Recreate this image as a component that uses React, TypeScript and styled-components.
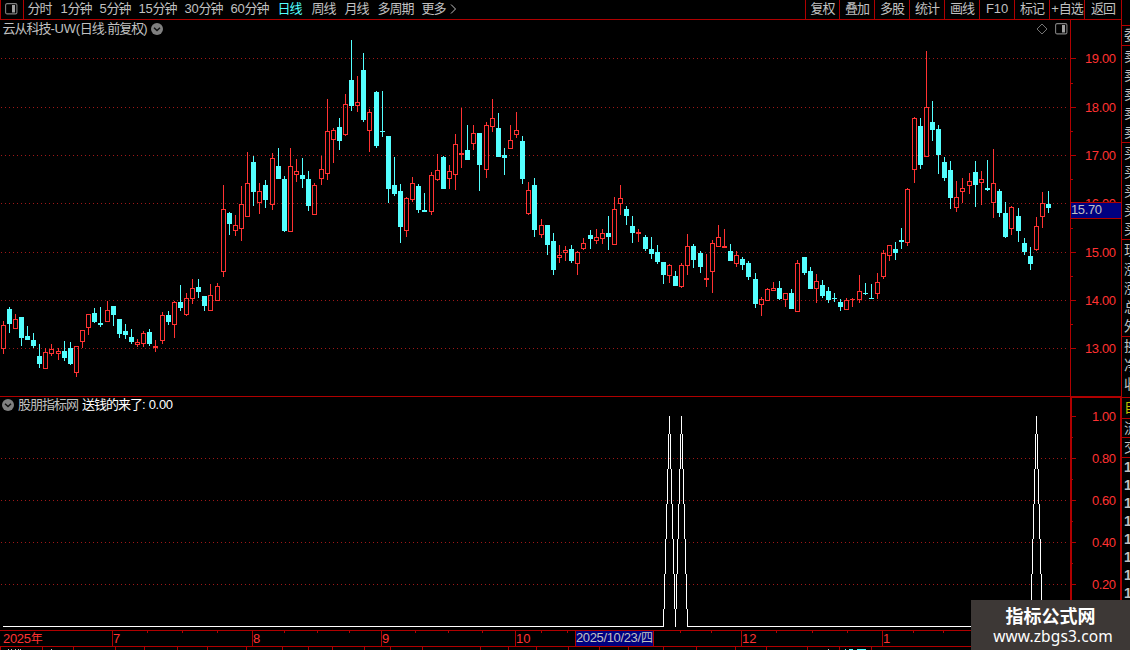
import React from "react";
import styled, { createGlobalStyle } from "styled-components";

const LINE = "#b00000";
const RED = "#ff3232";
const CYAN = "#54ffff";
const SILVER = "#c0c0c0";
const FONT = `"Liberation Sans", "Noto Sans CJK SC", sans-serif`;

const Global = createGlobalStyle`
  * { box-sizing: border-box; }
  html, body { margin: 0; padding: 0; background: #000; overflow: hidden; }
`;

const Screen = styled.div`
  position: relative;
  display: flex;
  width: 1130px;
  height: 650px;
  overflow: hidden;
  background: #000;
  color: ${SILVER};
  font-family: ${FONT};
  font-size: 13px;
`;

const Main = styled.main`
  display: flex;
  flex-direction: column;
  width: 1121px;
  flex: none;
`;

const Toolbar = styled.nav`
  display: flex;
  justify-content: space-between;
  height: 20px;
  border-bottom: 1px solid ${LINE};
`;

const ToolGroup = styled.div`
  display: flex;
`;

const PaneToggle = styled.div`
  display: flex;
  align-items: center;
  width: 24px;
  height: 19px;
  padding: 0 0 1px 4px;
  border: solid ${LINE};
  border-width: 0 1px;
`;

const Period = styled.div<{ $w: number; $active?: boolean }>`
  width: ${(p) => p.$w}px;
  padding-left: 3.5px;
  line-height: 18px;
  white-space: nowrap;
  color: ${(p) => (p.$active ? CYAN : SILVER)};
`;

const Command = styled.div<{ $w: number }>`
  display: flex;
  justify-content: center;
  width: ${(p) => p.$w}px;
  border-left: 1px solid ${LINE};
  line-height: 18px;
  white-space: nowrap;
`;

const Han = styled.span`
  letter-spacing: -1px;
`;

const Latin = styled.span<{ $track?: number }>`
  letter-spacing: ${(p) => p.$track ?? -0.3}px;
`;

const Panel = styled.section<{ $h: number }>`
  position: relative;
  height: ${(p) => p.$h}px;
`;

const PanelTitle = styled.div<{ $top: number; $left: number }>`
  position: absolute;
  top: ${(p) => p.$top}px;
  left: ${(p) => p.$left}px;
  display: flex;
  align-items: center;
  gap: 4px;
  height: 18px;
  line-height: 18px;
  white-space: pre;
`;

const Reading = styled.span`
  color: #fff;
`;

const PanelTools = styled.div`
  position: absolute;
  top: 3px;
  right: 53px;
  display: flex;
  align-items: center;
  gap: 7px;
`;

const Canvas = styled.svg`
  display: block;
  font-family: ${FONT};
`;

const Side = styled.aside`
  width: 9px;
  height: 650px;
  flex: none;
  overflow: hidden;
  border-left: 1px solid ${LINE};
`;

const SideBlock = styled.div<{ $h: number; $pad?: number }>`
  height: ${(p) => p.$h}px;
  padding-top: ${(p) => p.$pad ?? 0}px;
  border-bottom: 1px solid ${LINE};
  overflow: hidden;
`;

const SideRow = styled.div<{ $h?: number; $color?: string; $bold?: boolean }>`
  height: ${(p) => p.$h ?? 19}px;
  line-height: ${(p) => p.$h ?? 19}px;
  width: 24px;
  padding-left: 2px;
  font-size: 14px;
  font-weight: ${(p) => (p.$bold ? 700 : 400)};
  color: ${(p) => p.$color ?? SILVER};
`;

const SiteBadge = styled.div`
  position: absolute;
  right: 0;
  bottom: 0;
  display: flex;
  flex-direction: column;
  align-items: center;
  width: 159px;
  height: 50px;
  padding-top: 4px;
  background: #3d3836;
  color: #fff;
`;

const SiteName = styled.div`
  font: 700 18px/22px "Noto Sans CJK SC", sans-serif;
`;

const SiteUrl = styled.div`
  padding-left: 5px;
  font: 400 15.5px/20px "Noto Sans", "Open Sans", sans-serif;
  letter-spacing: 0.1px;
`;

/* Splits a label so Chinese and Latin runs get their own tracking. */
function Mixed({ text, track }: { text: string; track?: number }) {
  const runs = text.match(/[\u4e00-\u9fff]+|[^\u4e00-\u9fff]+/g) ?? [];
  return (
    <span>
      {runs.map((r, i) =>
        /[\u4e00-\u9fff]/.test(r) ? <Han key={i}>{r}</Han> : <Latin key={i} $track={track}>{r}</Latin>
      )}
    </span>
  );
}

const PERIODS: [string, number][] = [
  ["分时", 33], ["1分钟", 39], ["5分钟", 39], ["15分钟", 46], ["30分钟", 46], ["60分钟", 47],
  ["日线", 34], ["周线", 33], ["月线", 33], ["多周期", 44], ["更多", 28],
];

const COMMANDS: [string, number][] = [
  ["复权", 34], ["叠加", 35], ["多股", 35], ["统计", 35], ["画线", 35],
  ["F10", 35], ["标记", 35], ["+自选", 35], ["返回", 37],
];

/* One candle: x, high, body top, body bottom, low, and 1 for a rising day. */
type Candle = [number, number, number, number, number, 0 | 1];
const CANDLES: Candle[] = [
  [3,321,325,349,354,1],[9,307,309,324,333,0],[15,314,319,329,329,1],[21,317,317,338,346,0],
  [27,326,336,340,340,0],[33,333,340,346,348,0],[39,344,356,364,368,0],[45,348,352,369,369,1],
  [51,344,349,354,356,1],[58,348,351,354,360,1],[64,341,351,358,361,0],[70,342,348,364,365,0],
  [76,346,346,373,377,1],[82,330,330,342,348,1],[88,314,314,328,335,1],[94,308,313,322,323,0],
  [100,307,323,325,327,0],[107,301,310,322,322,1],[113,306,306,315,326,0],[119,319,319,334,338,0],
  [125,324,331,335,339,0],[131,329,337,342,344,0],[137,339,342,345,347,1],[143,331,333,344,347,1],
  [149,329,332,344,346,0],[155,340,346,348,352,1],[162,312,315,341,344,1],[168,311,315,322,325,0],
  [174,301,302,325,338,1],[180,285,302,308,311,0],[186,293,298,315,316,1],[192,279,288,299,304,1],
  [198,279,287,292,298,0],[204,296,296,306,311,0],[210,284,295,311,311,1],[217,283,286,301,301,1],
  [223,185,209,272,277,1],[229,212,213,224,235,0],[235,215,225,231,236,1],[241,186,204,229,241,1],
  [247,152,183,217,217,1],[253,156,162,192,206,0],[259,183,191,203,214,1],[265,180,185,200,208,0],
  [272,153,158,205,210,1],[278,148,166,179,179,0],[284,176,179,231,232,0],[290,148,166,232,232,1],
  [296,159,171,175,182,1],[302,158,175,179,188,0],[308,171,179,206,211,0],[314,183,185,215,215,1],
  [321,156,169,179,185,1],[327,99,131,174,180,1],[333,128,130,140,163,1],[339,118,127,141,150,0],
  [345,94,104,135,136,1],[351,40,80,106,111,0],[357,76,102,106,112,1],[363,53,70,120,122,0],
  [369,109,112,131,152,1],[376,91,92,146,148,0],[382,91,131,132,137,0],[388,136,136,189,203,0],
  [394,157,185,194,196,0],[400,184,191,227,243,0],[406,197,198,231,237,1],[412,177,183,200,202,1],
  [418,184,186,210,213,0],[424,193,210,212,212,0],[431,172,175,212,215,1],[437,154,170,180,181,1],
  [443,156,157,189,189,0],[449,165,171,179,189,1],[455,134,144,175,190,1],[461,108,153,155,168,1],
  [467,125,150,160,160,0],[473,125,133,144,150,1],[479,133,133,165,191,0],[486,122,125,170,178,1],
  [492,99,118,127,132,1],[498,113,128,157,157,0],[504,148,155,158,175,0],[510,125,140,149,149,1],
  [516,112,130,135,138,1],[522,136,141,179,184,0],[528,182,190,214,215,1],[534,178,185,230,237,0],
  [541,219,225,235,238,1],[547,225,225,245,255,0],[553,233,241,270,275,0],[559,245,255,258,263,1],
  [565,246,250,253,261,1],[571,245,249,261,263,0],[577,251,252,264,275,1],[583,238,243,249,250,1],
  [590,230,235,239,249,0],[596,229,237,241,244,1],[602,229,233,239,244,1],[608,216,233,237,250,0],
  [614,197,209,245,245,1],[620,185,198,204,215,1],[626,206,209,216,225,0],[632,216,226,233,243,0],
  [638,229,232,234,242,1],[645,235,237,249,251,0],[651,237,249,254,259,0],[657,245,252,262,264,0],
  [663,262,262,275,284,0],[669,264,265,276,283,1],[675,271,276,286,286,0],[681,263,265,287,288,1],
  [687,234,246,266,275,1],[693,244,246,260,268,0],[700,251,253,267,273,0],[706,254,278,280,287,1],
  [712,240,243,272,293,1],[718,225,237,247,247,1],[724,229,246,248,248,1],[730,244,251,261,261,0],
  [736,251,255,264,267,1],[742,257,259,265,270,0],[748,261,263,277,280,0],[755,273,279,304,308,0],
  [761,297,299,305,316,1],[767,288,289,301,301,1],[773,282,288,291,291,1],[779,281,288,299,300,0],
  [785,293,293,300,307,1],[791,289,293,309,309,0],[797,260,263,312,312,1],[804,257,257,273,275,0],
  [810,267,271,289,289,0],[816,274,281,289,303,1],[822,280,285,296,298,0],[828,287,291,300,303,0],
  [834,293,298,299,302,0],[840,299,302,307,311,0],[846,298,300,310,310,1],[852,298,299,300,307,1],
  [859,275,291,300,303,1],[865,283,293,294,295,0],[871,284,298,299,299,0],[877,273,282,294,299,1],
  [883,250,253,277,279,1],[889,245,245,256,261,1],[895,242,249,253,260,0],[901,228,240,242,249,0],
  [907,188,189,243,246,1],[914,117,118,170,183,1],[920,118,126,165,169,0],[926,51,107,157,157,1],
  [932,101,122,130,141,0],[938,125,129,155,174,0],[944,157,162,178,181,0],[950,161,170,198,209,0],
  [956,181,197,208,212,1],[962,178,188,192,203,1],[969,173,181,186,194,1],[975,161,172,185,207,0],
  [981,171,179,183,205,1],[987,160,188,190,191,0],[993,149,183,203,218,1],[999,189,191,213,217,0],
  [1005,202,213,237,238,0],[1011,206,207,229,235,1],[1018,208,216,231,242,0],[1024,238,243,252,255,0],
  [1030,247,256,264,270,0],[1036,217,226,250,251,1],[1042,192,203,217,228,1],[1048,191,204,208,213,0],
];

function CandleShape({ c: [x, hi, top, bottom, lo, up] }: { c: Candle }) {
  const h = bottom - top;
  if (!up || h <= 2) {
    return <path fill={up ? RED : CYAN} d={`M${x} ${hi}h1V${lo}h-1zM${x - 2} ${top}h5v${h}h-5z`} />;
  }
  return (
    <g>
      <path fill={RED} d={`M${x} ${hi}h1V${top}h-1zM${x} ${bottom}h1V${lo}h-1z`} />
      <rect x={x - 1.5} y={top + 0.5} width={4} height={h - 1} fill="none" stroke={RED} />
    </g>
  );
}

function GridLine({ y }: { y: number }) {
  return <path d={`M1 ${y + 0.5}H1066`} stroke="#a01818" strokeDasharray="1 3" />;
}

const PRICES: [number, string][] = [
  [58, "19.00"], [107, "18.00"], [155, "17.00"], [203, "16.00"], [252, "15.00"], [300, "14.00"], [348, "13.00"],
];
const HALF_PRICES = [83, 131, 179, 228, 276, 324];

function PriceChart() {
  return (
    <Canvas width={1121} height={376} viewBox="0 20 1121 376" shapeRendering="crispEdges">
      {PRICES.map(([y]) => <GridLine key={y} y={y} />)}
      {CANDLES.map((c) => <CandleShape key={c[0]} c={c} />)}
      <rect x={1070} y={20} width={1} height={376} fill={LINE} />
      {PRICES.map(([y, t]) => (
        <g key={y}>
          <rect x={1071} y={y} width={5} height={1} fill={LINE} />
          <text x={1085} y={y + 5} fontSize={13} fill={RED} textLength={31}>{t}</text>
        </g>
      ))}
      {HALF_PRICES.map((y) => <rect key={y} x={1071} y={y} width={2} height={1} fill={LINE} />)}
      <rect x={1071} y={202} width={50} height={17} fill={LINE} />
      <rect x={1071} y={203} width={50} height={15} fill="#000080" />
      <text x={1071} y={214} fontSize={13} fill={SILVER} textLength={31}>15.70</text>
    </Canvas>
  );
}

const LEVELS: [number, string][] = [[416, "1.00"], [458, "0.80"], [500, "0.60"], [542, "0.40"], [584, "0.20"]];
const HALF_LEVELS = [437, 479, 521, 563, 605];

/* A signal spike, stepped one pixel column at a time from the base line to its peak. */
function Spike({ x }: { x: number }) {
  const steps = [
    [0, 416, 434], [1, 434, 469], [2, 469, 504], [3, 504, 539], [4, 539, 574], [5, 574, 609], [6, 609, 627],
  ];
  return (
    <g fill="#fff">
      {steps.map(([d, a, b]) => (
        <path key={d} d={`M${x - d} ${a}h1V${b}h-1zM${x + d} ${a}h1V${b}h-1z`} />
      ))}
    </g>
  );
}

function SignalChart() {
  return (
    <Canvas width={1121} height={234} viewBox="0 396 1121 234" shapeRendering="crispEdges">
      <rect x={0} y={396} width={1121} height={1} fill={LINE} />
      <path fill={LINE} d="M1070 396h51v2h-51zM1070 396h2v234h-2zM1120 396h1v234h-1z" />
      {LEVELS.slice(1).map(([y]) => <GridLine key={y} y={y} />)}
      {LEVELS.map(([y, t]) => (
        <g key={y}>
          <rect x={1072} y={y} width={4} height={1} fill={LINE} />
          <text x={1092} y={y + 5} fontSize={13} fill={RED} textLength={24}>{t}</text>
        </g>
      ))}
      {HALF_LEVELS.map((y) => <rect key={y} x={1072} y={y} width={1} height={1} fill={LINE} />)}
      <path fill="#fff" d="M3 626h661v1h-661zM687 626h344v1h-344zM1042 626h7v1h-7z" />
      <Spike x={669} />
      <Spike x={681} />
      <Spike x={1036} />
    </Canvas>
  );
}

const MONTHS: [number, string][] = [[112, "7"], [252, "8"], [381, "9"], [515, "10"], [741, "12"], [882, "1"]];
const WEEK_TICKS = [147, 182, 217, 284, 317, 349, 415, 448, 482, 541, 567, 680, 711, 776, 812, 847, 913, 943];
const TAB_EDGES = [
  0, 42, 73, 115, 144, 177, 207, 246, 282, 308, 332, 364, 390, 422, 480, 508, 536, 568, 599, 628, 663, 696, 735,
  766, 807, 839, 871,
];

function TimeAxis() {
  return (
    <Canvas width={1121} height={20} viewBox="0 630 1121 20" shapeRendering="crispEdges">
      <path fill={LINE} d="M0 630h1121v1h-1121zM0 646h1121v1h-1121z" />
      {WEEK_TICKS.map((x) => <rect key={x} x={x} y={631} width={1} height={2} fill={LINE} />)}
      {MONTHS.map(([x, t]) => (
        <g key={x}>
          <rect x={x} y={631} width={1} height={15} fill={LINE} />
          <text x={x + 1} y={643} fontSize={13} fill={RED}>{t}</text>
        </g>
      ))}
      <text x={3} y={643} fontSize={13} fill={RED} letterSpacing={-0.3}>2025<tspan fontSize={12}>年</tspan></text>
      <rect x={575} y={631} width={79} height={15} fill={LINE} />
      <rect x={576} y={631} width={77} height={15} fill="#000080" />
      <text x={576} y={642} fontSize={13} fill={SILVER} textLength={65}>2025/10/23/</text>
      <text x={641} y={642} fontSize={12} fill={SILVER}>四</text>
      {TAB_EDGES.map((x) => <rect key={x} x={x} y={647} width={1} height={3} fill={LINE} />)}
      <path fill={SILVER} d="M8 649h1v1h-1zM11 649h1v1h-1zM15 649h1v1h-1zM18 649h1v1h-1zM20 649h1v1h-1zM51 649h1v1h-1zM828 649h1v1h-1z" />
      <path fill={CYAN} d="M845 649h1v1h-1zM849 649h4v1h-4zM857 649h9v1h-9z" />
    </Canvas>
  );
}

function DropMark() {
  return (
    <svg width="12" height="12" viewBox="0 0 12 12">
      <circle cx="6" cy="6" r="6" fill="#808080" />
      <path d="M3 4.8l3 2.7 3-2.7" fill="none" stroke="#111" strokeWidth="1.5" />
    </svg>
  );
}

function PaneIcon() {
  return (
    <svg width="13" height="12" viewBox="0 0 13 12">
      <rect x="0.6" y="0.6" width="11.3" height="10.3" rx="1.5" fill="none" stroke="#808080" strokeWidth="1.1" />
      <rect x="7" y="2" width="3" height="7.5" fill="#a0a0a0" />
    </svg>
  );
}

export default function App() {
  return (
    <Screen>
      <Global />
      <Main>
        <Toolbar>
          <ToolGroup>
            <PaneToggle><PaneIcon /></PaneToggle>
            {PERIODS.map(([t, w]) => (
              <Period key={t} $w={w} $active={t === "日线"}><Mixed text={t} track={-0.2} /></Period>
            ))}
            <svg width="12" height="19" viewBox="0 0 12 19">
              <path d="M5 4.5l4.5 4.5-4.5 4.5" fill="none" stroke={SILVER} />
            </svg>
          </ToolGroup>
          <ToolGroup>
            {COMMANDS.map(([t, w]) => (
              <Command key={t} $w={w}><Mixed text={t} track={-0.1} /></Command>
            ))}
          </ToolGroup>
        </Toolbar>
        <Panel $h={376}>
          <PriceChart />
          <PanelTitle $top={0} $left={2.5}>
            <Mixed text="云从科技-UW(日线.前复权)" track={-0.25} />
            <DropMark />
          </PanelTitle>
          <PanelTools>
            <svg width="12" height="12" viewBox="0 0 12 12">
              <path d="M6 1l5 5-5 5-5-5z" fill="none" stroke="#808080" strokeWidth="0.9" />
            </svg>
            <PaneIcon />
          </PanelTools>
        </Panel>
        <Panel $h={234}>
          <SignalChart />
          <PanelTitle $top={0} $left={2}>
            <DropMark />
            <Mixed text="股朋指标网" />
            <Reading><Mixed text="送钱的来了: 0.00" track={-0.3} /></Reading>
          </PanelTitle>
        </Panel>
        <TimeAxis />
      </Main>
      <Side>
        <SideBlock $h={26} />
        <SideBlock $h={20}><SideRow>委</SideRow></SideBlock>
        <SideBlock $h={97} $pad={1}>
          {[5, 4, 3, 2, 1].map((n) => <SideRow key={n}>卖</SideRow>)}
        </SideBlock>
        <SideBlock $h={97} $pad={1}>
          {[1, 2, 3, 4, 5].map((n) => <SideRow key={n}>买</SideRow>)}
        </SideBlock>
        <SideBlock $h={97} $pad={1}>
          {["现", "涨", "涨", "总", "外"].map((t, i) => <SideRow key={i}>{t}</SideRow>)}
        </SideBlock>
        <SideBlock $h={61}>
          {["换", "净", "收"].map((t) => <SideRow key={t}>{t}</SideRow>)}
        </SideBlock>
        <SideBlock $h={21}><SideRow $color="#c0c000">自</SideRow></SideBlock>
        <SideBlock $h={19}><SideRow $h={18}>流</SideRow></SideBlock>
        <SideBlock $h={20}><SideRow>交</SideRow></SideBlock>
        {[0, 1, 2, 3, 4, 5, 6, 7].map((n) => <SideRow key={n} $h={18} $bold>1</SideRow>)}
      </Side>
      <SiteBadge>
        <SiteName>指标公式网</SiteName>
        <SiteUrl>www.zbgs3.com</SiteUrl>
      </SiteBadge>
    </Screen>
  );
}
